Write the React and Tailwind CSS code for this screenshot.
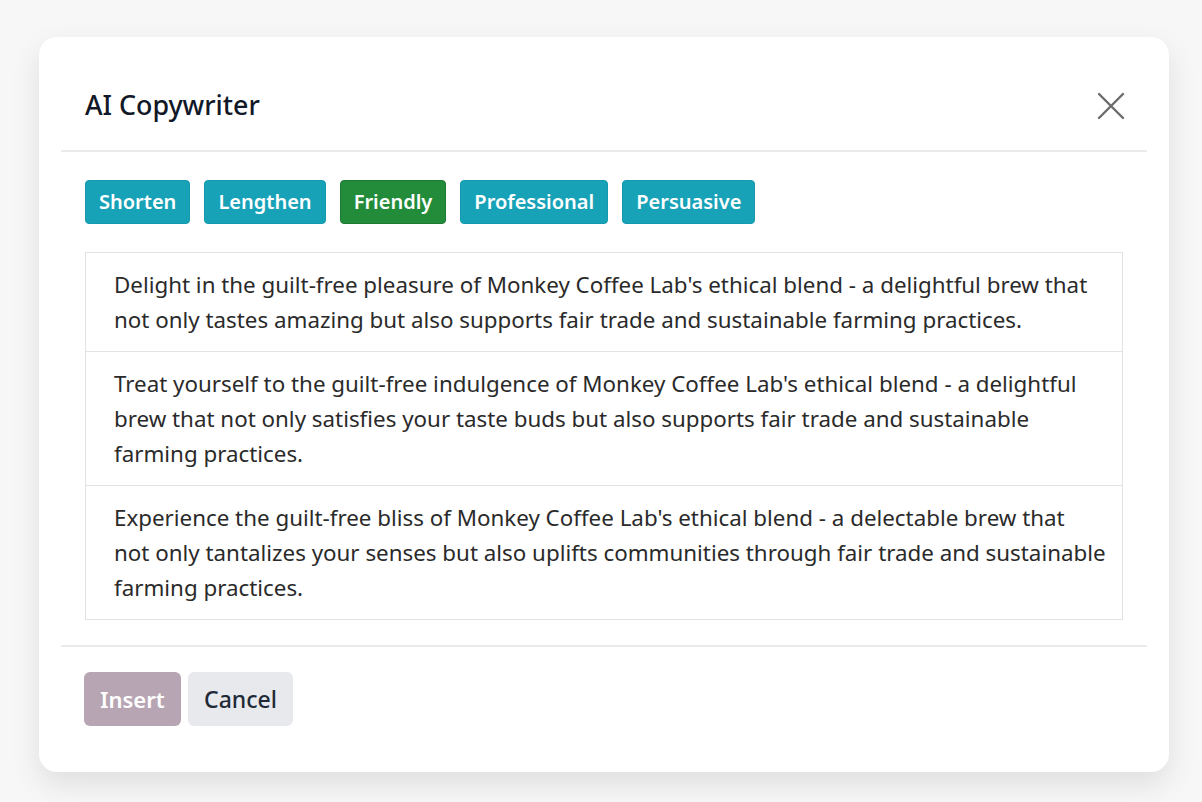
import React from 'react';

const tones = [
  { label: 'Shorten', active: false },
  { label: 'Lengthen', active: false },
  { label: 'Friendly', active: true },
  { label: 'Professional', active: false },
  { label: 'Persuasive', active: false },
];

// lines kept as in the source layout
const suggestions = [
  [
    "Delight in the guilt-free pleasure of Monkey Coffee Lab's ethical blend - a delightful brew that",
    'not only tastes amazing but also supports fair trade and sustainable farming practices.',
  ],
  [
    "Treat yourself to the guilt-free indulgence of Monkey Coffee Lab's ethical blend - a delightful",
    'brew that not only satisfies your taste buds but also supports fair trade and sustainable',
    'farming practices.',
  ],
  [
    "Experience the guilt-free bliss of Monkey Coffee Lab's ethical blend - a delectable brew that",
    'not only tantalizes your senses but also uplifts communities through fair trade and sustainable',
    'farming practices.',
  ],
];

export default function App() {
  return (
    <div className="w-[1202px] h-[802px] bg-[#f7f7f7] pt-[37px] pl-[39px] font-['Noto_Sans',sans-serif]">
      <div className="w-[1130px] h-[735px] bg-white rounded-[18px] shadow-[0_12px_30px_rgba(0,0,0,0.10)] flex flex-col">
        {/* Header */}
        <div className="mx-[22px] h-[115px] border-b-2 border-[#ebebeb] pl-[24px] pr-[22px] flex items-center justify-between pt-[24px]">
          <h1 className="text-[26.8px] font-medium text-[#111827]">AI Copywriter</h1>
          <button className="text-[#6b6b6b]">
            <svg width="28" height="28" viewBox="0 0 28 28" fill="none" stroke="currentColor" strokeWidth="2.4" strokeLinecap="round">
              <path d="M2 2L26 26M26 2L2 26" />
            </svg>
          </button>
        </div>

        {/* Body */}
        <div className="px-[46px] pt-[28px] pb-[25px]">
          <div className="flex gap-[14px]">
            {tones.map((t) => (
              <button
                key={t.label}
                className={`h-[44px] px-[13px] rounded-[4px] border text-[20px] font-semibold text-white ${
                  t.active ? 'bg-[#228c3a] border-[#1c7a32]' : 'bg-[#17a2b8] border-[#1499ae]'
                }`}
              >
                {t.label}
              </button>
            ))}
          </div>

          <div className="mt-[28px] border border-[#e3e3e3]">
            {suggestions.map((lines, i) => (
              <div
                key={i}
                className={`pl-[28px] pr-[4px] py-[14px] text-[22.35px] leading-[35px] text-[#2a2a2a] ${
                  i > 0 ? 'border-t border-[#e3e3e3]' : ''
                }`}
              >
                {lines.map((l, j) => (
                  <span key={j} className="block whitespace-nowrap">
                    {l}
                  </span>
                ))}
              </div>
            ))}
          </div>
        </div>

        {/* Footer */}
        <div className="mx-[22px] border-t-2 border-[#ebebeb] pt-[25px] px-[23px] flex gap-[7px]">
          <button className="h-[54px] w-[97px] rounded-[6px] bg-[#b8a5b3] text-white text-[22px] font-semibold">
            Insert
          </button>
          <button className="h-[54px] w-[105px] rounded-[6px] bg-[#e7e9ed] text-[#1f2937] text-[23px] font-medium">
            Cancel
          </button>
        </div>
      </div>
    </div>
  );
}
